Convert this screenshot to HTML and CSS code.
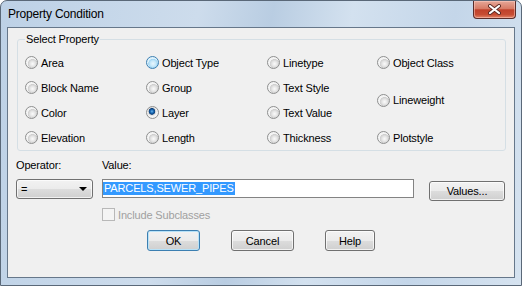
FILE: index.html
```html
<!DOCTYPE html>
<html lang="en">
<head>
    <meta charset="UTF-8">
    <title>Property Condition</title>
    <link rel="stylesheet" href="styles.css">
</head>
<body>

    <div class="window">
        <div class="titlebar">
            <span class="title">Property Condition</span>
            <div class="close">
                <svg width="15" height="11" viewBox="0 0 15 11">
                    <path d="M3 2 L12 9 M12 2 L3 9" stroke="#5b2a24" stroke-width="4" stroke-linecap="round"/>
                    <path d="M3 2 L12 9 M12 2 L3 9" stroke="#ffffff" stroke-width="2.2" stroke-linecap="round"/>
                </svg>
            </div>
        </div>

        <div class="client">
            <fieldset class="group">
                <legend>Select Property</legend>
                <div class="props">
                    <label class="opt"><span class="radio"></span>Area</label>
                    <label class="opt"><span class="radio"></span>Block Name</label>
                    <label class="opt"><span class="radio"></span>Color</label>
                    <label class="opt"><span class="radio"></span>Elevation</label>

                    <label class="opt"><span class="radio hover"></span>Object Type</label>
                    <label class="opt"><span class="radio"></span>Group</label>
                    <label class="opt"><span class="radio checked"></span>Layer</label>
                    <label class="opt"><span class="radio"></span>Length</label>

                    <label class="opt"><span class="radio"></span>Linetype</label>
                    <label class="opt"><span class="radio"></span>Text Style</label>
                    <label class="opt"><span class="radio"></span>Text Value</label>
                    <label class="opt"><span class="radio"></span>Thickness</label>

                    <label class="opt"><span class="radio"></span>Object Class</label>
                    <label class="opt tall"><span class="radio"></span>Lineweight</label>
                    <label class="opt"><span class="radio"></span>Plotstyle</label>
                </div>
            </fieldset>

            <div class="fields">
                <div class="lbl">Operator:</div>
                <div class="lbl">Value:</div>

                <div class="select">=<span class="arrow"></span></div>
                <div class="value-row">
                    <div class="input"><span class="sel">PARCELS,SEWER_PIPES</span></div>
                    <div class="btn values">Values...</div>
                </div>

                <div class="check"><span class="box"></span>Include Subclasses</div>
            </div>

            <div class="buttons">
                <div class="btn default ok">OK</div>
                <div class="btn cancel">Cancel</div>
                <div class="btn help">Help</div>
            </div>
        </div>
    </div>

</body>
</html>
```

FILE: styles.css
```css
body {
    margin: 0;
    font-family: "Liberation Sans", Arial, sans-serif;
    font-size: 11px;
    letter-spacing: -0.15px;
    color: #000;
    background: #fff;
}

.window {
    width: 522px;
    height: 286px;
    box-sizing: border-box;
    border: 1px solid #5a6878;
    border-radius: 7px 7px 0 0;
    background: linear-gradient(100deg, #bdd1e6 0%, #cddcec 35%, #b9cde2 48%, #d3e1ef 62%, #c4d6e9 80%, #d6e3f0 100%);
    overflow: hidden;
}

.titlebar {
    height: 26px;
    display: flex;
    padding: 0 5px 0 7px;
}

.title {
    font-size: 12px;
    line-height: 26px;
    letter-spacing: -0.2px;
}

.close {
    margin-left: auto;
    width: 43px;
    height: 18px;
    box-sizing: border-box;
    border: 1px solid #5a2d2a;
    border-top: none;
    border-radius: 0 0 4px 4px;
    background: linear-gradient(#e6a898 0%, #d77b66 45%, #c0412a 52%, #c74d33 80%, #e3866a 100%);
    box-shadow: inset 0 0 0 1px rgba(255, 210, 200, 0.5);
    display: flex;
    align-items: center;
    justify-content: center;
}

.client {
    margin: 0 6px;
    height: 251px;
    box-sizing: border-box;
    border: 1px solid #66778a;
    background: #f0f0f0;
}

.group {
    margin: 5px 8px 0 9px;
    padding: 4px 0 0 7px;
    border: 1px solid #d5dfe5;
    border-radius: 3px;
    height: 118px;
    box-sizing: border-box;
}

.group legend {
    padding: 0 1px;
    line-height: 13px;
}

.props {
    display: grid;
    grid-template-columns: 121px 121px 110px 1fr;
    grid-template-rows: repeat(4, 25px);
    grid-auto-flow: column;
}

.opt {
    display: flex;
    align-items: center;
    gap: 3px;
}

.opt.tall {
    grid-row: span 2;
}

.radio {
    width: 13px;
    height: 13px;
    box-sizing: border-box;
    border: 1px solid #8e8f8f;
    border-radius: 50%;
    background: radial-gradient(circle at 60% 62%, #fbfbfb 0, #e6e6e6 2.5px, #cfcfcf 4.5px, #f4f4f4 5px);
}

.radio.hover {
    border-color: #3c7fb1;
    background: radial-gradient(circle at 55% 60%, #e9f7fe 0, #c4e7f9 3px, #9fd4f3 4.5px, #def2fc 5px);
}

.radio.checked {
    background: radial-gradient(circle at 45% 40%, #6fb5ec 0, #1a6bb5 1.6px, #0d3f7a 3px, #d8d8d8 3.6px, #f4f4f4 5px);
}

.fields {
    display: grid;
    grid-template-columns: 77px 1fr;
    column-gap: 9px;
    margin: 7px 8px 0;
}

.lbl {
    line-height: 14px;
    margin-bottom: 7px;
}

.select {
    height: 20px;
    box-sizing: border-box;
    border: 1px solid #707070;
    border-radius: 3px;
    background: linear-gradient(#f2f2f2 0, #ebebeb 50%, #dddddd 50%, #cfcfcf 100%);
    box-shadow: inset 0 0 0 1px rgba(255, 255, 255, 0.7);
    display: flex;
    align-items: center;
    padding: 0 4px;
}

.arrow {
    margin-left: auto;
    margin-right: 1px;
    border-left: 4px solid transparent;
    border-right: 4px solid transparent;
    border-top: 4px solid #000;
}

.value-row {
    display: flex;
    align-items: flex-start;
}

.input {
    width: 312px;
    height: 19px;
    box-sizing: border-box;
    border: 1px solid #838383;
    background: #fff;
    padding: 2px 0 0 0;
}

.sel {
    display: inline-block;
    line-height: 13px;
    padding: 0 1px;
    background: #3399ff;
    color: #fff;
}

.check {
    grid-column: 2;
    margin-top: 7px;
    height: 13px;
    display: flex;
    align-items: center;
    gap: 3px;
    color: #a0a0a0;
}

.box {
    width: 13px;
    height: 13px;
    box-sizing: border-box;
    border: 1px solid #b8b8b8;
    background: #f4f4f4;
}

.buttons {
    display: flex;
    justify-content: center;
    gap: 31px;
    margin-top: 9px;
}

.btn {
    height: 21px;
    box-sizing: border-box;
    border: 1px solid #707070;
    border-radius: 3px;
    background: linear-gradient(#f2f2f2 0, #ebebeb 50%, #dddddd 50%, #cfcfcf 100%);
    box-shadow: inset 0 0 0 1px rgba(255, 255, 255, 0.7);
    display: flex;
    align-items: center;
    justify-content: center;
}

.btn.values {
    width: 76px;
    height: 20px;
    margin: 2px 0 0 15px;
}

.btn.default {
    border-color: #3c7fb1;
    box-shadow: inset 0 0 0 1px #b8e2f8;
}

.ok { width: 53px; }
.cancel { width: 63px; }
.help { width: 50px; }
```
